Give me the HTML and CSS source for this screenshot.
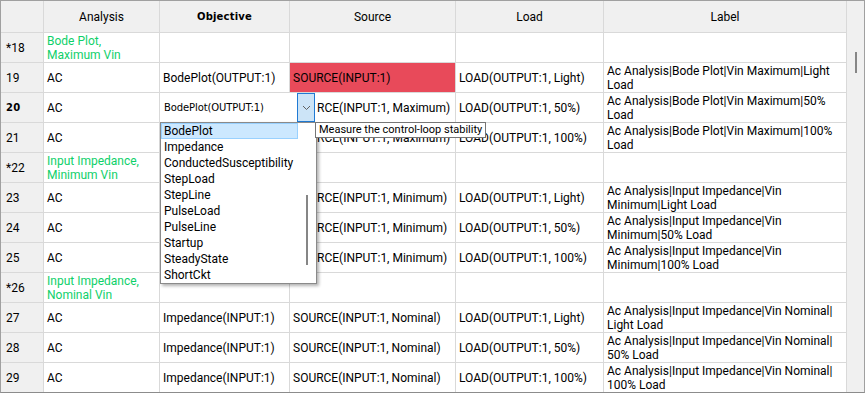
FILE: index.html
```html
<!DOCTYPE html>
<html lang="en">
<head>
    <meta charset="UTF-8">
    <title>Test Plan</title>
    <link rel="stylesheet" href="styles.css">
</head>
<body>

<div class="grid">
    <div class="table">
        <div class="row head">
            <div class="cell"></div>
            <div class="cell">Analysis</div>
            <div class="cell bold">Objective</div>
            <div class="cell">Source</div>
            <div class="cell">Load</div>
            <div class="cell">Label</div>
        </div>

        <div class="row">
            <div class="cell num">*18</div>
            <div class="cell group">Bode Plot,<br>Maximum Vin</div>
            <div class="cell"></div>
            <div class="cell"></div>
            <div class="cell"></div>
            <div class="cell"></div>
        </div>
        <div class="row">
            <div class="cell num">19</div>
            <div class="cell">AC</div>
            <div class="cell">BodePlot(OUTPUT:1)</div>
            <div class="cell error">SOURCE(INPUT:1)</div>
            <div class="cell">LOAD(OUTPUT:1, Light)</div>
            <div class="cell">Ac Analysis|Bode Plot|Vin Maximum|Light<br>Load</div>
        </div>
        <div class="row">
            <div class="cell num current">20</div>
            <div class="cell">AC</div>
            <div class="cell"></div>
            <div class="cell hidden-start">RCE(INPUT:1, Maximum)</div>
            <div class="cell">LOAD(OUTPUT:1, 50%)</div>
            <div class="cell">Ac Analysis|Bode Plot|Vin Maximum|50%<br>Load</div>
        </div>
        <!-- objective cells under the open list are left blank -->
        <div class="row">
            <div class="cell num">21</div>
            <div class="cell">AC</div>
            <div class="cell"></div>
            <div class="cell hidden-start">RCE(INPUT:1, Maximum)</div>
            <div class="cell">LOAD(OUTPUT:1, 100%)</div>
            <div class="cell">Ac Analysis|Bode Plot|Vin Maximum|100%<br>Load</div>
        </div>

        <div class="row">
            <div class="cell num">*22</div>
            <div class="cell group">Input Impedance,<br>Minimum Vin</div>
            <div class="cell"></div>
            <div class="cell"></div>
            <div class="cell"></div>
            <div class="cell"></div>
        </div>
        <div class="row">
            <div class="cell num">23</div>
            <div class="cell">AC</div>
            <div class="cell"></div>
            <div class="cell hidden-start">RCE(INPUT:1, Minimum)</div>
            <div class="cell">LOAD(OUTPUT:1, Light)</div>
            <div class="cell">Ac Analysis|Input Impedance|Vin<br>Minimum|Light Load</div>
        </div>
        <div class="row">
            <div class="cell num">24</div>
            <div class="cell">AC</div>
            <div class="cell"></div>
            <div class="cell hidden-start">RCE(INPUT:1, Minimum)</div>
            <div class="cell">LOAD(OUTPUT:1, 50%)</div>
            <div class="cell">Ac Analysis|Input Impedance|Vin<br>Minimum|50% Load</div>
        </div>
        <div class="row">
            <div class="cell num">25</div>
            <div class="cell">AC</div>
            <div class="cell"></div>
            <div class="cell hidden-start">RCE(INPUT:1, Minimum)</div>
            <div class="cell">LOAD(OUTPUT:1, 100%)</div>
            <div class="cell">Ac Analysis|Input Impedance|Vin<br>Minimum|100% Load</div>
        </div>

        <div class="row">
            <div class="cell num">*26</div>
            <div class="cell group">Input Impedance,<br>Nominal Vin</div>
            <div class="cell"></div>
            <div class="cell"></div>
            <div class="cell"></div>
            <div class="cell"></div>
        </div>
        <div class="row">
            <div class="cell num">27</div>
            <div class="cell">AC</div>
            <div class="cell">Impedance(INPUT:1)</div>
            <div class="cell">SOURCE(INPUT:1, Nominal)</div>
            <div class="cell">LOAD(OUTPUT:1, Light)</div>
            <div class="cell">Ac Analysis|Input Impedance|Vin Nominal|<br>Light Load</div>
        </div>
        <div class="row">
            <div class="cell num">28</div>
            <div class="cell">AC</div>
            <div class="cell">Impedance(INPUT:1)</div>
            <div class="cell">SOURCE(INPUT:1, Nominal)</div>
            <div class="cell">LOAD(OUTPUT:1, 50%)</div>
            <div class="cell">Ac Analysis|Input Impedance|Vin Nominal|<br>50% Load</div>
        </div>
        <div class="row">
            <div class="cell num">29</div>
            <div class="cell">AC</div>
            <div class="cell">Impedance(INPUT:1)</div>
            <div class="cell">SOURCE(INPUT:1, Nominal)</div>
            <div class="cell">LOAD(OUTPUT:1, 100%)</div>
            <div class="cell">Ac Analysis|Input Impedance|Vin Nominal|<br>100% Load</div>
        </div>
    </div>

    <div class="vscroll">
        <div class="thumb"></div>
    </div>

    <!-- editor open on row 20, Objective column -->
    <div class="combo">
        <span class="combo-text">BodePlot(OUTPUT:1)</span>
        <span class="combo-btn">
            <svg width="9" height="6" viewBox="0 0 9 6"><path d="M1 1 L4.5 4.5 L8 1" fill="none" stroke="#606060" stroke-width="1"/></svg>
        </span>
    </div>

    <div class="popup">
        <ul class="options">
            <li class="selected">BodePlot</li>
            <li>Impedance</li>
            <li>ConductedSusceptibility</li>
            <li>StepLoad</li>
            <li>StepLine</li>
            <li>PulseLoad</li>
            <li>PulseLine</li>
            <li>Startup</li>
            <li>SteadyState</li>
            <li>ShortCkt</li>
        </ul>
        <div class="popup-scroll"><div class="popup-thumb"></div></div>
    </div>

    <div class="tooltip">Measure the control-loop stability</div>
</div>

</body>
</html>
```
FILE: styles.css
```css
body {
    margin: 0;
    font-family: Roboto, "Noto Sans", sans-serif;
    font-size: 12px;
    color: #000;
    background: #fff;
}

.grid {
    position: relative;
    width: 865px;
    height: 393px;
    box-sizing: border-box;
    border: 1px solid #a0a0a0;
    border-bottom-color: #8c8c8c;
    display: flex;
    overflow: hidden;
}

.table {
    width: 846px;
    flex: none;
}

.row {
    display: grid;
    grid-template-columns: 43px 116px 130px 166px 148px 243px;
    height: 30px;
}

.cell {
    box-sizing: border-box;
    border-right: 1px solid #d9d9d9;
    border-bottom: 1px solid #d9d9d9;
    padding: 0 3px;
    display: flex;
    align-items: center;
    line-height: 14px;
    white-space: nowrap;
    overflow: hidden;
}

/* source text whose start is covered by the open editor */
.hidden-start {
    padding-left: 27px;
}

.head {
    height: 32px;
    background: #f0f0f0;
}

.head .cell {
    justify-content: center;
}

.bold,
.current {
    font-family: "DejaVu Sans", sans-serif;
    font-weight: bold;
    font-size: 10px;
    letter-spacing: 0.2px;
}

.num {
    background: #f0f0f0;
    padding-left: 5px;
}

.group {
    color: #0fd06a;
}

.error {
    background: #e84a5a;
}

/* vertical scrollbar of the table */
.vscroll {
    flex: 1;
    background: #f0f0f0;
    position: relative;
}

.thumb {
    position: absolute;
    left: 8px;
    top: 51px;
    width: 2px;
    height: 21px;
    background: #868686;
}

/* combo box editor */
.combo {
    position: absolute;
    left: 159px;
    top: 92px;
    width: 156px;
    height: 29px;
    background: #fff;
    display: flex;
    align-items: center;
}

.combo-text {
    flex: 1;
    padding-left: 4px;
    font-family: "DejaVu Sans", sans-serif;
    font-size: 10px;
    letter-spacing: -0.1px;
}

.combo-btn {
    width: 16px;
    height: 27px;
    margin-right: 1px;
    align-self: flex-start;
    border: 1px solid #1f7ad4;
    background: #cce4f7;
    display: flex;
    align-items: center;
    justify-content: center;
}

.popup {
    position: absolute;
    left: 159px;
    top: 121px;
    width: 157px;
    height: 162px;
    box-sizing: border-box;
    border: 1px solid #8a8a8a;
    background: #fff;
    box-shadow: 2px 2px 3px rgba(0, 0, 0, 0.3);
    display: flex;
}

.options {
    list-style: none;
    margin: 0;
    padding: 0;
    width: 137px;
}

.options li {
    box-sizing: border-box;
    height: 16px;
    line-height: 14px;
    padding: 1px 3px 0;
    white-space: nowrap;
}

.options li.selected {
    background: #cce8ff;
    border: 1px solid #99d1ff;
    padding: 0 2px;
}

.popup-scroll {
    flex: 1;
    position: relative;
}

.popup-thumb {
    position: absolute;
    left: 8px;
    top: 72px;
    width: 2px;
    height: 70px;
    background: #868686;
}

.tooltip {
    position: absolute;
    left: 314px;
    top: 121px;
    height: 16px;
    box-sizing: border-box;
    border: 1px solid #767676;
    background: #fff;
    padding: 0 3px;
    font-size: 11px;
    line-height: 14px;
    white-space: nowrap;
}
```
